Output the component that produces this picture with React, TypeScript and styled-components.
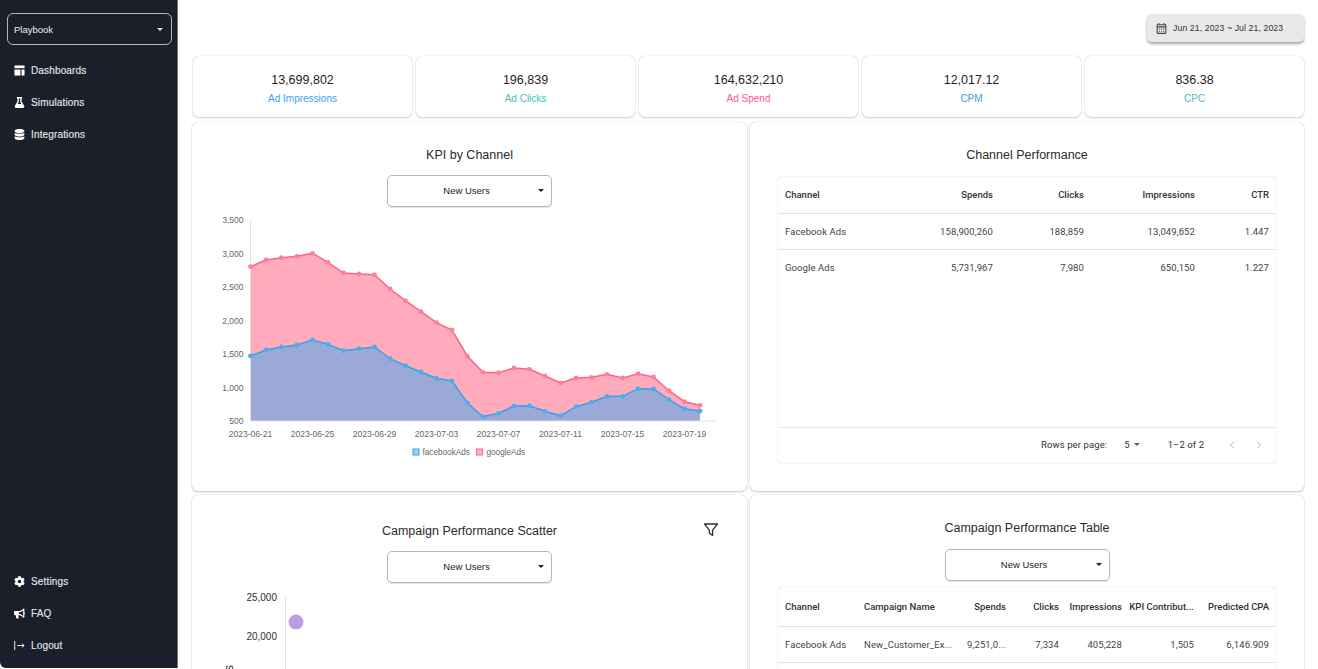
import React from "react"
import styled, { createGlobalStyle } from "styled-components"
import { FaBullhorn, FaCog, FaDatabase, FaFlask } from "react-icons/fa"
import { MdOutlineCalendarMonth } from "react-icons/md"
import { ChevronLeft, ChevronRight } from "lucide-react"

const GlobalStyle = createGlobalStyle`
    html, body {
        margin: 0;
        height: 100%;
        background: #fff;
        overflow: hidden;
        font-family: "Liberation Sans", Arial, sans-serif;
    }
`

const SANS = `"Liberation Sans", Arial, sans-serif`
const ROBOTO = `Roboto, "Liberation Sans", sans-serif`

const Shell = styled.div`
    display: flex;
    width: 100vw;
    height: 100vh;
    overflow: hidden;
`

/* ---------- sidebar ---------- */

const Sidebar = styled.aside`
    flex: 0 0 178px;
    box-sizing: border-box;
    height: 668px;
    padding: 13px 0 7px;
    display: flex;
    flex-direction: column;
    justify-content: space-between;
    background: #1a1f29;
    border-right: 1px solid #6d7077;
    border-bottom-left-radius: 6px;
`

const PlaybookSelect = styled.div`
    box-sizing: border-box;
    width: 165px;
    height: 32px;
    margin-left: 7px;
    padding: 0 8px 0 6px;
    display: flex;
    align-items: center;
    justify-content: space-between;
    border: 1px solid #b4b6ba;
    border-radius: 6px;
    color: #eee;
    font-size: 9.5px;
`

const Nav = styled.nav<{ $top?: number }>`
    margin-top: ${({ $top }) => $top ?? 0}px;
`

const NavItem = styled.div`
    height: 32px;
    padding-left: 14px;
    display: flex;
    align-items: center;
    gap: 6px;
    color: #e4e5e7;
    font-size: 10px;
    letter-spacing: 0.15px;
    -webkit-text-stroke: 0.15px #e4e5e7;

    svg {
        flex: 0 0 11px;
        width: 11px;
        height: 11px;
        color: #fff;
    }
`

const Caret = styled.span<{ $color?: string }>`
    flex: none;
    width: 0;
    height: 0;
    border-left: 3.5px solid transparent;
    border-right: 3.5px solid transparent;
    border-top: 3.5px solid ${({ $color }) => $color ?? "#222"};
`

const DashboardGlyph = () => (
    <svg viewBox="0 0 12 12" fill="currentColor">
        <rect x="0.5" y="0.5" width="11" height="3" />
        <rect x="0.5" y="5" width="6.5" height="6.5" />
        <rect x="8.2" y="5" width="3.3" height="6.5" />
    </svg>
)

const LogoutGlyph = () => (
    <svg viewBox="0 0 12 12" fill="none" stroke="currentColor" strokeWidth="1">
        <path d="M0.8 1v10" />
        <path d="M3.5 6h7.5M8.8 4l2.2 2-2.2 2" />
    </svg>
)

/* ---------- main column ---------- */

const Main = styled.main`
    flex: 1;
    min-width: 0;
    padding: 14px 14px 0 14px;
`

const TopBar = styled.div`
    display: flex;
    justify-content: flex-end;
    margin-bottom: 14px;
`

const DateButton = styled.button`
    box-sizing: border-box;
    width: 157px;
    height: 28px;
    padding: 0 0 0 8px;
    display: flex;
    align-items: center;
    gap: 5px;
    border: 0;
    border-radius: 5px;
    background: #e8e8e8;
    box-shadow: 0 2px 3px rgba(0, 0, 0, 0.35);
    color: #333;
    font-family: ${SANS};
    font-size: 8.7px;
    letter-spacing: 0.1px;

    svg {
        width: 13px;
        height: 13px;
        color: #444;
    }
`

const KpiRow = styled.section`
    display: grid;
    grid-template-columns: repeat(5, 219px);
    gap: 4px;
    margin: 0 0 5px 1px;
`

const KpiCard = styled.div`
    box-sizing: border-box;
    height: 61px;
    padding-top: 16px;
    border-radius: 6px;
    background: #fff;
    box-shadow: 0 0 1px rgba(80, 80, 110, 0.4), 0 1px 2px rgba(80, 80, 110, 0.25);
    text-align: center;
`

const KpiValue = styled.div`
    height: 16px;
    line-height: 16px;
    color: #1e1e1e;
    font-size: 12.5px;
`

const KpiLabel = styled.div<{ $color: string }>`
    margin-top: 5px;
    height: 12px;
    line-height: 12px;
    color: ${({ $color }) => $color};
    font-size: 10px;
`

const PanelGrid = styled.section`
    display: grid;
    grid-template-columns: 555px 554px;
    grid-template-rows: 369px 400px;
    gap: 4px 3px;
`

const Panel = styled.div<{ $top?: number }>`
    position: relative;
    box-sizing: border-box;
    padding-top: ${({ $top }) => $top ?? 24}px;
    display: flex;
    flex-direction: column;
    align-items: center;
    border-radius: 6px;
    background: #fff;
    box-shadow: 0 0 1px rgba(80, 80, 110, 0.4), 0 1px 2px rgba(80, 80, 110, 0.3);
`

const PanelTitle = styled.h2`
    margin: 0;
    height: 18px;
    line-height: 18px;
    color: #2b2b2b;
    font-size: 12.5px;
    font-weight: 400;
`

const MetricSelect = styled.div<{ $top?: number }>`
    flex: none;
    box-sizing: border-box;
    width: 165px;
    height: 32px;
    margin-top: ${({ $top }) => $top ?? 11}px;
    padding: 0 7px 2px;
    display: flex;
    align-items: center;
    border: 1px solid #b5b5b5;
    border-radius: 5px;
    box-shadow: 0 1px 1px rgba(0, 0, 0, 0.12);
    color: #222;
    font-size: 9.5px;

    span:first-child {
        flex: 1;
        text-align: center;
    }
`

const FilterButton = styled.span`
    position: absolute;
    top: 27px;
    right: 28px;
    width: 16px;
    height: 16px;
    color: #2a2f38;

    svg {
        display: block;
    }
`

const ChartSvg = styled.svg`
    flex: none;
    display: block;
    font-family: ${SANS};
`

/* ---------- tables ---------- */

const TableCard = styled.div<{ $top: number; $height: number }>`
    flex: none;
    box-sizing: border-box;
    width: 498px;
    height: ${({ $height }) => $height}px;
    margin-top: ${({ $top }) => $top}px;
    display: flex;
    flex-direction: column;
    border-radius: 4px;
    box-shadow: 0 0 1px rgba(60, 60, 80, 0.4);
    font-family: ${ROBOTO};
`

const Table = styled.table`
    width: 498px;
    table-layout: fixed;
    border-collapse: collapse;
`

const Col = styled.col<{ $w: number }>`
    width: ${({ $w }) => $w}px;
`

const Th = styled.th<{ $left?: boolean; $h: number }>`
    box-sizing: border-box;
    height: ${({ $h }) => $h}px;
    padding: ${({ $left }) => ($left ? "0 7px" : "0 7px 0 0")};
    border-bottom: 1px solid #e2e2e2;
    color: #333;
    font-size: 9.5px;
    font-weight: 500;
    white-space: nowrap;
    text-align: ${({ $left }) => ($left ? "left" : "right")};
`

const Td = styled.td<{ $left?: boolean; $flush?: boolean }>`
    box-sizing: border-box;
    height: 36px;
    padding: 0 7px;
    border-bottom: ${({ $flush }) => ($flush ? "0" : "1px solid #e2e2e2")};
    color: #444;
    font-size: 9.5px;
    letter-spacing: 0.1px;
    white-space: nowrap;
    text-align: ${({ $left }) => ($left ? "left" : "right")};
`

const TableFooter = styled.div`
    margin-top: auto;
    height: 36px;
    box-sizing: border-box;
    padding-bottom: 2px;
    display: flex;
    align-items: center;
    border-top: 1px solid #e8e8e8;
    color: #333;
    font-size: 9.5px;
    letter-spacing: 0.1px;
`

const RowsLabel = styled.span`
    margin-left: 263px;
`

const RowsValue = styled.span`
    margin-left: 17px;
    margin-right: 4px;
`

const PageRange = styled.span`
    margin-left: 28px;
`

const PageArrow = styled.span<{ $left: number }>`
    margin-left: ${({ $left }) => $left}px;
    display: flex;
    color: #b4b4b4;

    svg {
        width: 12px;
        height: 12px;
    }
`

/* ---------- data ---------- */

const kpis = [
    { value: "13,699,802", label: "Ad Impressions", color: "#3d9fee" },
    { value: "196,839", label: "Ad Clicks", color: "#43c2be" },
    { value: "164,632,210", label: "Ad Spend", color: "#ff5a82" },
    { value: "12,017.12", label: "CPM", color: "#36a2eb" },
    { value: "836.38", label: "CPC", color: "#43c2be" },
]

const pinkY = [170, 150, 143, 139, 130, 157, 189, 192, 194, 237, 272, 305, 338, 360, 439, 487, 488, 474, 478, 498, 519, 504, 502, 493, 504, 491, 501, 542, 575, 586]
const blueY = [438, 420, 411, 405, 390, 403, 422, 416, 411, 446, 467, 486, 505, 513, 579, 620, 610, 588, 587, 604, 617, 590, 577, 559, 559, 536, 537, 569, 596, 603]

const px = (i: number) => 250.5 + i * 15.5
const py = (z: number) => 210 + z / 3
const BASE = 421

const linePath = (ys: number[]) => ys.map((y, i) => `${i ? "L" : "M"}${px(i)} ${py(y).toFixed(1)}`).join(" ")
const areaPath = (ys: number[]) => `${linePath(ys)} L${px(ys.length - 1)} ${BASE} L${px(0)} ${BASE} Z`

const yTicks = ["3,500", "3,000", "2,500", "2,000", "1,500", "1,000", "500"]
const xTicks = ["2023-06-21", "2023-06-25", "2023-06-29", "2023-07-03", "2023-07-07", "2023-07-11", "2023-07-15", "2023-07-19"]

const KpiChart = () => (
    <ChartSvg width="555" height="262" viewBox="192 207 555 262">
        <path d={areaPath(pinkY)} fill="#ffabbc" />
        <path d={areaPath(blueY)} fill="#9ba9d6" />
        <path d={`M250.5 220V${BASE}H716`} fill="none" stroke="#e3e3e3" />
        <path d={linePath(pinkY)} fill="none" stroke="#ff6384" strokeWidth="1.5" />
        <path d={linePath(blueY)} fill="none" stroke="#36a2eb" strokeWidth="1.5" />
        {pinkY.map((y, i) => (
            <circle key={i} cx={px(i)} cy={py(y)} r="2.4" fill="#ff7f9b" />
        ))}
        {blueY.map((y, i) => (
            <circle key={i} cx={px(i)} cy={py(y)} r="2.4" fill="#4dadef" />
        ))}
        {yTicks.map((t, i) => (
            <text key={t} x="243.5" y={223 + i * 33.5} textAnchor="end" fontSize="8.5" fill="#666">
                {t}
            </text>
        ))}
        {xTicks.map((t, i) => (
            <text key={t} x={250.5 + i * 62} y="437" textAnchor="middle" fontSize="8.5" fill="#666">
                {t}
            </text>
        ))}
        <rect x="413" y="449" width="6" height="6" fill="#9bd0f5" stroke="#36a2eb" />
        <text x="422.5" y="454.5" fontSize="8.2" fill="#666">facebookAds</text>
        <rect x="476.5" y="449" width="6" height="6" fill="#ffb1c1" stroke="#ff6384" />
        <text x="486.5" y="454.5" fontSize="8.2" fill="#666">googleAds</text>
    </ChartSvg>
)

const ScatterChart = () => (
    <ChartSvg width="555" height="90" viewBox="192 583 555 90">
        <path d="M285.5 597V673" fill="none" stroke="#e3e3e3" />
        <text x="277" y="600.5" textAnchor="end" fontSize="10" fill="#333">25,000</text>
        <text x="277" y="640" textAnchor="end" fontSize="10" fill="#333">20,000</text>
        <circle cx="296" cy="622" r="7.5" fill="#bd9fe0" />
        <text transform="rotate(-90 233 665)" x="233" y="665" textAnchor="end" fontSize="12" fill="#333">Spends</text>
    </ChartSvg>
)

const channelHead = ["Channel", "Spends", "Clicks", "Impressions", "CTR"]
const channelRows = [
    ["Facebook Ads", "158,900,260", "188,859", "13,049,652", "1.447"],
    ["Google Ads", "5,731,967", "7,980", "650,150", "1.227"],
]

const campaignHead = ["Channel", "Campaign Name", "Spends", "Clicks", "Impressions", "KPI Contribut...", "Predicted CPA"]
const campaignRows = [
    ["Facebook Ads", "New_Customer_Ex...", "9,251,0...", "7,334", "405,228", "1,505", "6,146.909"],
]

const App = () => {
    return (
        <Shell>
            <GlobalStyle />
            <Sidebar>
                <div>
                    <PlaybookSelect>
                        <span>Playbook</span>
                        <Caret $color="#eee" />
                    </PlaybookSelect>
                    <Nav $top={9}>
                        <NavItem><DashboardGlyph />Dashboards</NavItem>
                        <NavItem><FaFlask />Simulations</NavItem>
                        <NavItem><FaDatabase />Integrations</NavItem>
                    </Nav>
                </div>
                <Nav>
                    <NavItem><FaCog />Settings</NavItem>
                    <NavItem><FaBullhorn />FAQ</NavItem>
                    <NavItem><LogoutGlyph />Logout</NavItem>
                </Nav>
            </Sidebar>
            <Main>
                <TopBar>
                    <DateButton>
                        <MdOutlineCalendarMonth />
                        Jun 21, 2023 ~ Jul 21, 2023
                    </DateButton>
                </TopBar>
                <KpiRow>
                    {kpis.map((k) => (
                        <KpiCard key={k.label}>
                            <KpiValue>{k.value}</KpiValue>
                            <KpiLabel $color={k.color}>{k.label}</KpiLabel>
                        </KpiCard>
                    ))}
                </KpiRow>
                <PanelGrid>
                    <Panel>
                        <PanelTitle>KPI by Channel</PanelTitle>
                        <MetricSelect>
                            <span>New Users</span>
                            <Caret />
                        </MetricSelect>
                        <KpiChart />
                    </Panel>
                    <Panel>
                        <PanelTitle>Channel Performance</PanelTitle>
                        <TableCard $top={13} $height={286}>
                            <Table>
                                <colgroup>
                                    {[130, 92, 91, 111, 74].map((w) => <Col key={w} $w={w} />)}
                                </colgroup>
                                <thead>
                                    <tr>
                                        {channelHead.map((h, i) => (
                                            <Th key={h} $h={36} $left={i === 0}>{h}</Th>
                                        ))}
                                    </tr>
                                </thead>
                                <tbody>
                                    {channelRows.map((row, r) => (
                                        <tr key={r}>
                                            {row.map((c, i) => (
                                                <Td key={i} $left={i === 0} $flush={r === channelRows.length - 1}>{c}</Td>
                                            ))}
                                        </tr>
                                    ))}
                                </tbody>
                            </Table>
                            <TableFooter>
                                <RowsLabel>Rows per page:</RowsLabel>
                                <RowsValue>5</RowsValue>
                                <Caret $color="#666" />
                                <PageRange>1–2 of 2</PageRange>
                                <PageArrow $left={22}><ChevronLeft /></PageArrow>
                                <PageArrow $left={15}><ChevronRight /></PageArrow>
                            </TableFooter>
                        </TableCard>
                    </Panel>
                    <Panel $top={27}>
                        <PanelTitle>Campaign Performance Scatter</PanelTitle>
                        <FilterButton>
                            <svg width="16" height="16" viewBox="0 0 16 16" fill="none" stroke="currentColor" strokeWidth="1.3" strokeLinejoin="round">
                                <path d="M1.5 2h13L9.6 8.2 V13.6 L6.4 11.2 V8.2 Z" />
                            </svg>
                        </FilterButton>
                        <MetricSelect>
                            <span>New Users</span>
                            <Caret />
                        </MetricSelect>
                        <ScatterChart />
                    </Panel>
                    <Panel>
                        <PanelTitle>Campaign Performance Table</PanelTitle>
                        <MetricSelect $top={12}>
                            <span>New Users</span>
                            <Caret />
                        </MetricSelect>
                        <TableCard $top={6} $height={200}>
                            <Table>
                                <colgroup>
                                    {[79, 100, 56, 53, 63, 72, 75].map((w, i) => <Col key={i} $w={w} />)}
                                </colgroup>
                                <thead>
                                    <tr>
                                        {campaignHead.map((h, i) => (
                                            <Th key={h} $h={39} $left={i < 2}>{h}</Th>
                                        ))}
                                    </tr>
                                </thead>
                                <tbody>
                                    {campaignRows.map((row, r) => (
                                        <tr key={r}>
                                            {row.map((c, i) => <Td key={i} $left={i < 2}>{c}</Td>)}
                                        </tr>
                                    ))}
                                </tbody>
                            </Table>
                        </TableCard>
                    </Panel>
                </PanelGrid>
            </Main>
        </Shell>
    )
}

export default App
